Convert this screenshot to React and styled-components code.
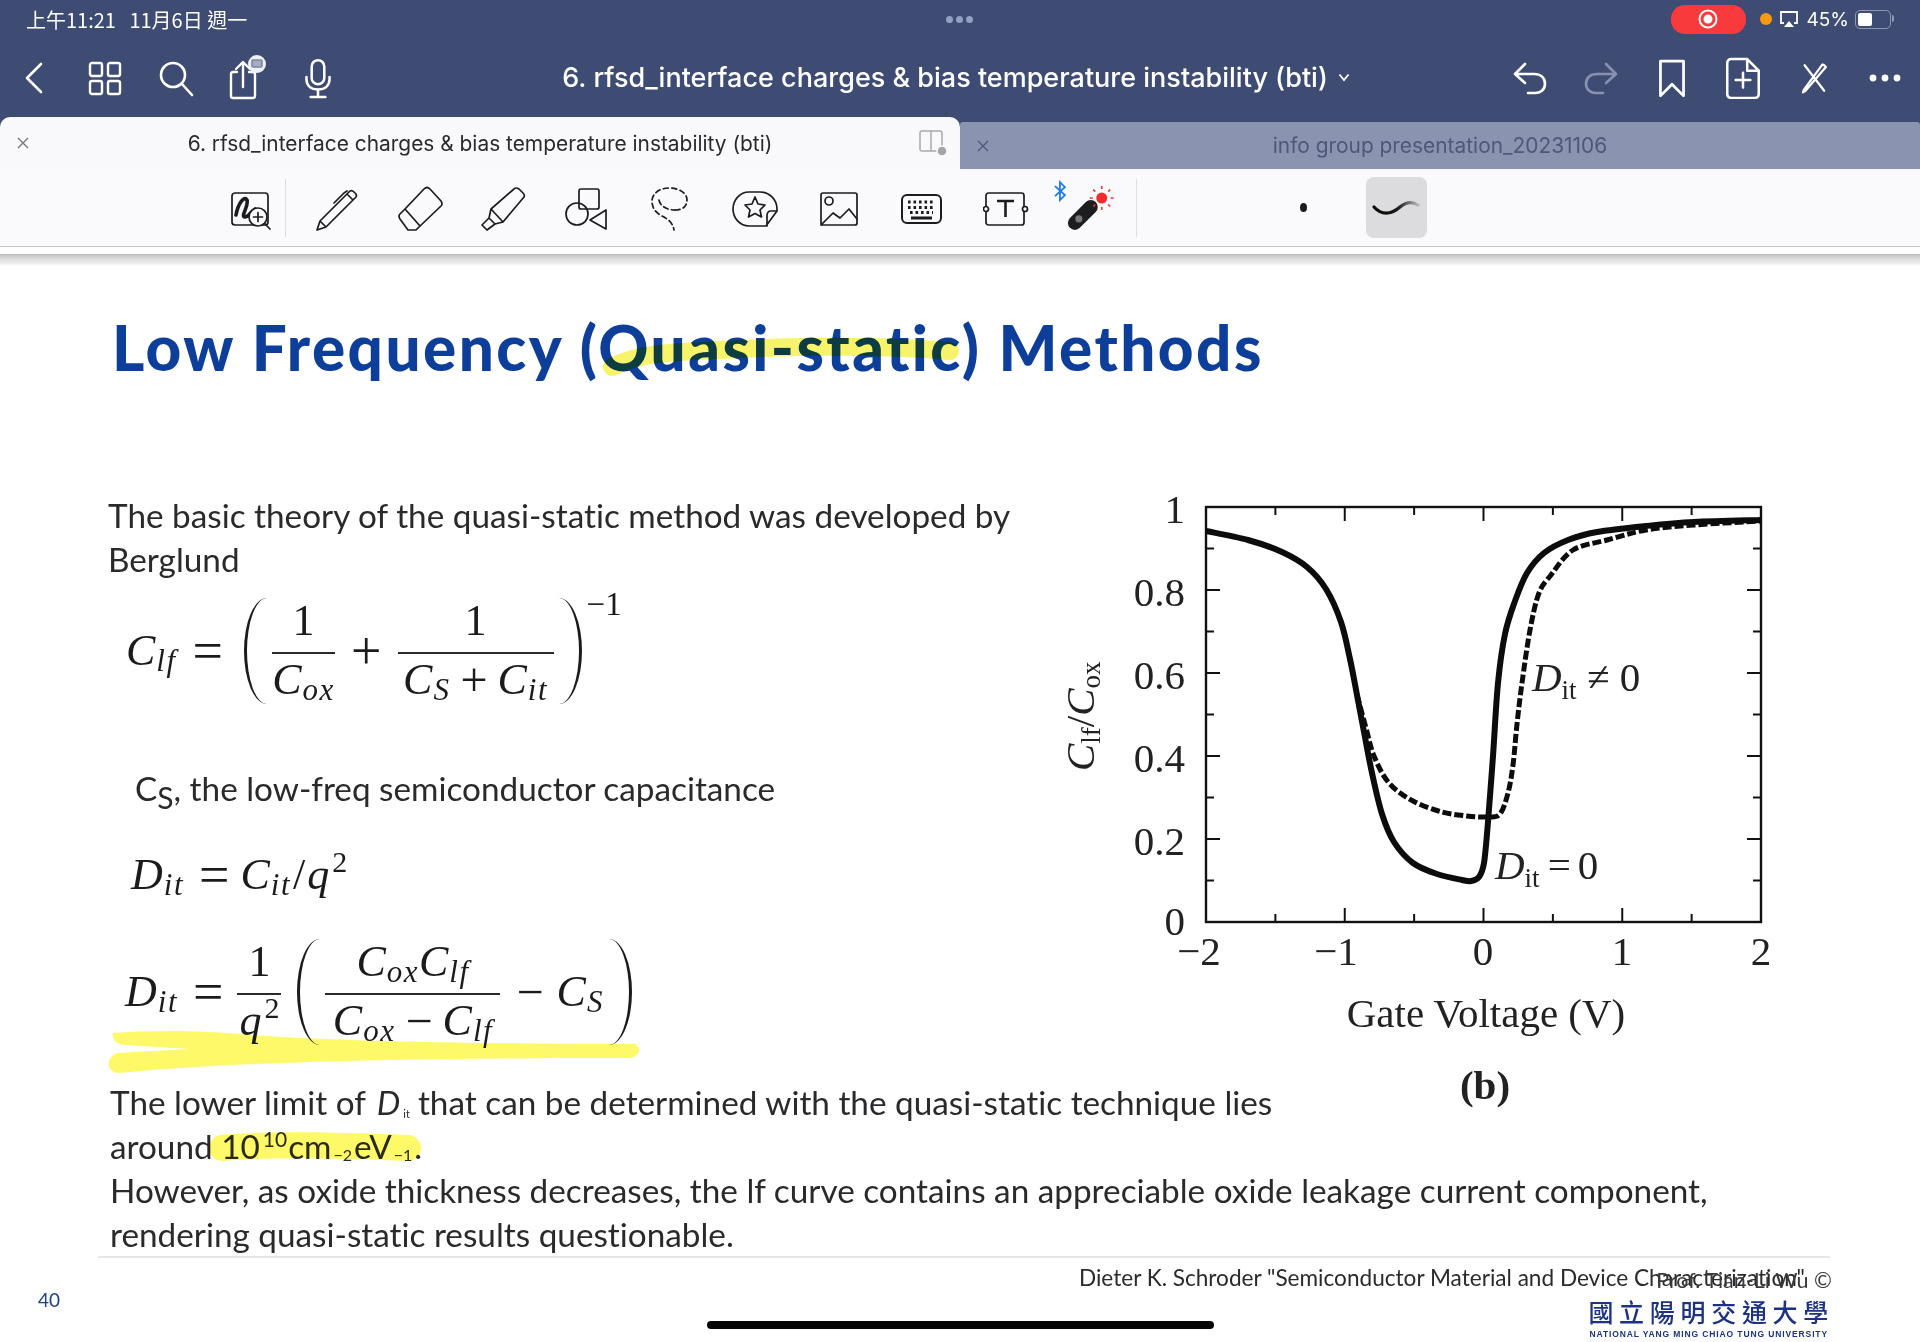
import React from 'react'
import styled, { createGlobalStyle } from 'styled-components'

const GlobalStyle = createGlobalStyle`
  html, body {
    margin: 0;
    padding: 0;
    background: #fff;
  }
  body {
    width: 1920px;
    height: 1342px;
    overflow: hidden;
    font-family: Inter, "Noto Sans", sans-serif;
  }
`

const Page = styled.div`
  position: relative;
  width: 1920px;
  height: 1342px;
  overflow: hidden;
  background: #fff;
`

const Header = styled.header`
  background: #3e4c73;
  color: #fff;
`

const StatusBar = styled.div`
  height: 38px;
  display: grid;
  grid-template-columns: 1fr auto 1fr;
  align-items: center;
  padding: 0 26px;
`

const Clock = styled.div`
  font-family: "Noto Sans CJK TC", sans-serif;
  font-size: 20px;
  white-space: pre;
`

const Dots = styled.div`
  display: flex;
  gap: 3px;
  margin-left: -1px;
  span {
    width: 7px;
    height: 7px;
    border-radius: 50%;
    background: #93a0c4;
  }
`

const StatusRight = styled.div`
  display: flex;
  align-items: center;
  justify-content: flex-end;
  font-size: 19px;
`

const BatteryLabel = styled.span`
  margin-left: 8px;
`

const RecordPill = styled.div`
  width: 75px;
  height: 29px;
  border-radius: 14px;
  background: #f83a3c;
  display: flex;
  align-items: center;
  justify-content: center;
  margin-right: 14px;
`

const OrangeDot = styled.span`
  width: 12px;
  height: 12px;
  border-radius: 50%;
  background: #f59a12;
  margin-right: 7px;
`

const Battery = styled.div`
  width: 36px;
  height: 19px;
  margin: 0 3px 0 6px;
  border: 1.5px solid #8d98b8;
  border-radius: 5px;
  padding: 2px;
  box-sizing: border-box;
  position: relative;
  span {
    display: block;
    width: 45%;
    height: 100%;
    background: #fff;
    border-radius: 2px;
  }
  &::after {
    content: '';
    position: absolute;
    right: -4px;
    top: 4px;
    width: 2px;
    height: 7px;
    border-radius: 0 2px 2px 0;
    background: #8d98b8;
  }
`

const NavBar = styled.div`
  height: 79px;
  display: grid;
  grid-template-columns: 1fr auto 1fr;
  align-items: center;
  box-sizing: border-box;
`

const NavGroup = styled.div`
  display: flex;
  justify-content: ${(p) => (p.$end ? 'flex-end' : 'flex-start')};
  margin-left: ${(p) => (p.$end ? 0 : -1.5)}px;
`

const NavSlot = styled.div`
  width: 71px;
  display: flex;
  justify-content: center;
  align-items: center;
`

const NavTitle = styled.div`
  display: flex;
  align-items: center;
  gap: 10px;
  font-size: 27px;
  font-weight: 500;
  white-space: nowrap;
  margin-left: -8px;
`

const Tabs = styled.div`
  display: flex;
  align-items: flex-end;
  height: 52px;
  background: #3e4c73;
`

const Tab = styled.div`
  flex: 1;
  height: ${(p) => (p.$active ? 52 : 47)}px;
  position: relative;
  display: flex;
  align-items: center;
  justify-content: center;
  box-sizing: border-box;
  font-size: 20.9px;
  white-space: nowrap;
  border-radius: ${(p) => (p.$active ? '10px 10px 0 0' : '3px 3px 0 0')};
  background: ${(p) => (p.$active ? '#f9f8fb' : '#8a93b0')};
  color: ${(p) => (p.$active ? '#2b2b2e' : '#4f5878')};
`

const TabClose = styled.span`
  position: absolute;
  left: 16px;
  top: 50%;
  transform: translateY(-50%);
  display: flex;
`

const TabSplit = styled.span`
  position: absolute;
  right: 12px;
  top: 50%;
  transform: translateY(-50%);
  display: flex;
`

const Toolbar = styled.div`
  height: 77px;
  display: flex;
  align-items: center;
  padding-left: 216.5px;
  background: #faf9fc;
  border-bottom: 1px solid #c6c6c8;
`

const ToolSlot = styled.div`
  width: ${(p) => p.$w || 83.6}px;
  margin-top: 3px;
  display: flex;
  align-items: center;
  justify-content: center;
  flex-shrink: 0;
`

const ToolDivider = styled.div`
  width: 1px;
  height: 58px;
  background: #dededf;
  margin: 0 ${(p) => p.$after}px 0 ${(p) => p.$before}px;
  flex-shrink: 0;
`

const BrushDot = styled.div`
  width: 7px;
  height: 9px;
  border-radius: 50%;
  background: #1d1d1f;
  margin-left: 163px;
  flex-shrink: 0;
`

const BrushButton = styled.div`
  width: 61px;
  height: 61px;
  margin-left: 59px;
  border-radius: 8px;
  background: #dcdbdd;
  display: flex;
  align-items: center;
  justify-content: center;
  flex-shrink: 0;
`

const WhiteStrip = styled.div`
  height: 7px;
  background: #fff;
`

const ShadowFade = styled.div`
  height: 12px;
  background: linear-gradient(#bcbcbc, #d8d8d8 35%, #ececec 75%, #fff);
`

const Slide = styled.main`
  padding-top: 46px;
`

const SlideTitle = styled.h1`
  margin: 0 0 0 112px;
  font-family: Lato, sans-serif;
  font-weight: 900;
  font-size: 62px;
  line-height: 70px;
  letter-spacing: 2.45px;
  color: #0d3e9a;
  white-space: nowrap;
  font-variant-ligatures: none;
`

const Columns = styled.div`
  margin-top: 107px;
  height: 591px;
  display: grid;
  grid-template-columns: 1040px 750px;
`

const LeftColumn = styled.div`
  padding: 4px 0 0 108px;
`

const Body = styled.p`
  margin: ${(p) => p.$top || 0}px 0 0 ${(p) => p.$left || 0}px;
  font-family: Lato, sans-serif;
  font-size: 33.3px;
  line-height: 44px;
  color: #2a2a2c;
  white-space: nowrap;
  font-variant-ligatures: none;
`

const TextVar = styled.i`
  margin-left: 3px;
`

const TextSub = styled.sub`
  font-size: ${(p) => p.$size || 16}px;
  line-height: 0;
  vertical-align: ${(p) => p.$drop ?? -2}px;
  margin: 0 ${(p) => p.$after ?? 2}px 0 ${(p) => p.$before ?? 2}px;
`

const TextSup = styled.sup`
  font-size: 21px;
  line-height: 0;
  vertical-align: 12px;
  margin: 0 1px 0 3px;
`

const Formula = styled.div`
  height: ${(p) => p.$h}px;
  margin: ${(p) => p.$top}px 0 0 ${(p) => p.$left}px;
  display: flex;
  align-items: center;
  font-family: "Liberation Serif", serif;
  font-size: 44px;
  line-height: 1;
  color: #1b1b1d;
  white-space: nowrap;
`

const Var = styled.i`
  font-style: italic;
  margin-right: 1px;
`

const Sub = styled.i`
  font-size: 31px;
  font-style: italic;
  letter-spacing: 1.5px;
  position: relative;
  top: 9px;
`

const Op = styled.span`
  font-size: ${(p) => p.$size || 54}px;
  margin: 0 ${(p) => p.$after ?? p.$gap ?? 16}px 0 ${(p) => p.$gap ?? 16}px;
`

const Frac = styled.div`
  display: inline-flex;
  flex-direction: column;
  align-items: center;
  width: ${(p) => p.$w}px;
`

const Num = styled.div`
  height: 58px;
  box-sizing: border-box;
  padding-bottom: 6px;
  width: 100%;
  border-bottom: 2px solid #2a2a2a;
  display: flex;
  align-items: center;
  justify-content: center;
`

const Den = styled.div`
  height: 52px;
  width: 100%;
  display: flex;
  align-items: center;
  justify-content: center;
`

// half of the ellipse sticks out over the neighbouring fraction, only its curved edge shows
const Paren = styled.span`
  flex-shrink: 0;
  display: inline-block;
  width: 46px;
  height: 106px;
  box-sizing: border-box;
  border-radius: 50%;
  margin: ${(p) => (p.$right ? '0 0 0 -18px' : `0 -18px 0 ${p.$before || 0}px`)};
  border-${(p) => (p.$right ? 'right' : 'left')}: 3.4px solid #1b1b1d;
`

const Power = styled.span`
  font-size: 33px;
  align-self: flex-start;
  position: relative;
  top: -3px;
  margin-left: 5px;
`

const InlineSup = styled.span`
  font-size: 30px;
  position: relative;
  top: -13px;
  margin-left: 2px;
`

const Slash = styled.span`
  margin: 0 2px;
`

const Figure = styled.svg`
  display: block;
  width: 750px;
  height: 620px;
  overflow: visible;
`

const ChartText = styled.text`
  font-family: "Liberation Serif", serif;
  font-size: 41px;
  fill: #222;
`

const LowerText = styled.section`
  margin-left: 110px;
`

const Divider = styled.hr`
  height: 2px;
  margin: 0 90px 0 98px;
  border: 0;
  background: #e6e6e6;
`

const Footer = styled.footer`
  display: flex;
  justify-content: space-between;
  padding: 5px 89px 0 38px;
`

const PageNumber = styled.div`
  margin-top: 26px;
  font-family: Lato, sans-serif;
  font-size: 19px;
  line-height: 22px;
  color: #1e3f8a;
`

const Credits = styled.div`
  display: flex;
  flex-direction: column;
  align-items: flex-end;
`

const CreditStack = styled.div`
  display: grid;
  justify-items: end;
`

const Citation = styled.div`
  grid-area: 1 / 1;
  margin-right: 26px;
  font-family: Lato, sans-serif;
  font-size: 22.6px;
  line-height: 30px;
  color: #2b2b2d;
  white-space: nowrap;
  font-variant-ligatures: none;
`

const Professor = styled.div`
  grid-area: 1 / 1;
  margin: 2px -1px 0 0;
  font-family: Lato, sans-serif;
  font-size: 21.5px;
  line-height: 30px;
  color: #3a3a3c;
  white-space: nowrap;
`

const SchoolName = styled.div`
  margin: 0 -3px 2px 0;
  font-family: "Noto Sans CJK TC", sans-serif;
  font-weight: 500;
  font-size: 25px;
  line-height: 32px;
  letter-spacing: 5.7px;
  color: #1d3282;
`

const SchoolEnglish = styled.div`
  margin-right: 3px;
  font-family: "Liberation Sans", sans-serif;
  font-weight: 700;
  font-size: 8.5px;
  line-height: 11px;
  letter-spacing: 0.88px;
  color: #1d3282;
  white-space: nowrap;
`

const HomeBar = styled.div`
  position: absolute;
  left: 707px;
  bottom: 13px;
  width: 507px;
  height: 8px;
  border-radius: 4px;
  background: #050505;
`

const InkLayer = styled.svg`
  position: absolute;
  left: 0;
  top: 0;
  width: 1920px;
  height: 1342px;
  pointer-events: none;
  mix-blend-mode: multiply;
`

// nav icons
const Stroke = ({ size = 40, children, color = '#fff', width = 2.6 }) => (
  <svg width={size} height={size} viewBox="0 0 40 40" fill="none" stroke={color} strokeWidth={width} strokeLinecap="round" strokeLinejoin="round">
    {children}
  </svg>
)

const Back = () => <Stroke><path d="M27 6 L13 20 L27 34" /></Stroke>
const GridIcon = () => (
  <Stroke width={2.4}>
    <rect x="5" y="5" width="12" height="13" rx="2" />
    <rect x="23" y="5" width="12" height="13" rx="2" />
    <rect x="5" y="23" width="12" height="13" rx="2" />
    <rect x="23" y="23" width="12" height="13" rx="2" />
  </Stroke>
)
const SearchIcon = () => (
  <Stroke><circle cx="17" cy="17" r="12" /><path d="M26 26 L36 37" /></Stroke>
)
const ShareIcon = () => (
  <svg width="44" height="48" viewBox="-2 0 44 48" fill="none" stroke="#fff" strokeWidth="2.4" strokeLinecap="round" strokeLinejoin="round">
    <path d="M10 18 H6 Q4 18 4 20 V42 Q4 44 6 44 H26 Q28 44 28 42 V20 Q28 18 26 18 H22" />
    <path d="M16 33 V9 M9 15 L16 8 L23 15" />
    <circle cx="30" cy="10" r="9" fill="#eef0f5" stroke="none" />
    <rect x="25" y="6" width="10" height="7" rx="1" stroke="#7c869f" strokeWidth="1.6" fill="#a5adc0" />
  </svg>
)
const MicIcon = () => (
  <Stroke size={42} width={2.4}>
    <rect x="14" y="3" width="12" height="23" rx="6" />
    <path d="M9 19 V21 C9 28 14 31 20 31 C26 31 31 28 31 21 V19 M20 31 V37 M13 38 H27" />
  </Stroke>
)
const UndoIcon = () => (
  <Stroke>
    <path d="M15 6 L5 16 L15 25 M5 16 H24 C31 16 35 20 35 26 C35 32 30 35 25 35 H18" />
  </Stroke>
)
const RedoIcon = () => (
  <Stroke color="#8892b0">
    <path d="M25 6 L35 16 L25 25 M35 16 H16 C9 16 5 20 5 26 C5 32 10 35 15 35 H22" />
  </Stroke>
)
const BookmarkIcon = () => (
  <Stroke size={42}><path d="M9 4 H31 V37 L20 26 L9 37 Z" /></Stroke>
)
const AddPageIcon = () => (
  <Stroke size={42} width={2.4}>
    <path d="M24 2 H9 Q5 2 5 6 V35 Q5 39 9 39 H31 Q35 39 35 35 V13 Z M24 2 V13 H35 M20 15 V29 M13 22 H27" />
  </Stroke>
)
const MarkupIcon = () => (
  <Stroke size={34} width={2.6}>
    <path d="M9 5 L32 35 M32 5 L30 4 L8 34 L7 37 L10 35 L34 7 Z" />
  </Stroke>
)
const MoreIcon = () => (
  <svg width="34" height="10" viewBox="0 0 34 10" fill="#fff">
    <circle cx="5" cy="5" r="3.4" /><circle cx="17" cy="5" r="3.4" /><circle cx="29" cy="5" r="3.4" />
  </svg>
)
const Chevron = () => (
  <svg width="12" height="9" viewBox="0 0 12 9" fill="none" stroke="#fff" strokeWidth="1.8"><path d="M1.5 1.5 L6 7 L10.5 1.5" /></svg>
)
const CloseX = ({ color }) => (
  <svg width="14" height="14" viewBox="0 0 14 14" fill="none" stroke={color} strokeWidth="1.4"><path d="M2 2 L12 12 M12 2 L2 12" /></svg>
)
const SplitIcon = () => (
  <svg width="30" height="30" viewBox="0 0 30 30" fill="none" stroke="#a9a9ae" strokeWidth="1.5">
    <rect x="2" y="3" width="22" height="20" rx="2" />
    <path d="M13 3 V23" />
    <circle cx="24" cy="23" r="5" fill="#a4a4a9" stroke="#f9f8fb" />
  </svg>
)
const RecordRing = () => (
  <svg width="22" height="22" viewBox="0 0 22 22">
    <circle cx="11" cy="11" r="8.5" fill="none" stroke="#fff" strokeWidth="2" />
    <circle cx="11" cy="11" r="4.5" fill="#fff" />
  </svg>
)
const AirPlay = () => (
  <svg width="20" height="20" viewBox="0 0 20 20" fill="none" stroke="#fff" strokeWidth="1.8">
    <path d="M5 14 H2 V3 H18 V14 H15" />
    <path d="M10 12 L15 18 H5 Z" fill="#fff" stroke="none" />
  </svg>
)

// toolbar icons
const Tool = ({ children, w = 46, h = 46 }) => (
  <svg width={w} height={h} viewBox={`0 0 ${w} ${h}`} fill="none" stroke="#1c1c1e" strokeWidth="1.7" strokeLinecap="round" strokeLinejoin="round">
    {children}
  </svg>
)
const InkZoom = () => (
  <Tool>
    <rect x="4" y="7" width="36" height="32" rx="3" />
    <path d="M8 29 C10 18 16 9 19 14 C21 20 12 31 17 31 C21 31 23 25 27 23" strokeWidth="3.6" />
    <circle cx="30" cy="31" r="9" fill="#faf9fc" />
    <path d="M30 26.5 V35.5 M25.5 31 H34.5 M36.5 37.5 L42 43" />
  </Tool>
)
const Pencil = () => (
  <Tool>
    <path d="M3 44 L6 35 L33 8 L39 14 L12 41 Z M6 35 L12 41 M33 8 L36 5 Q38 4 40 6 L42 8 Q43 10 42 11 L39 14" />
    <path d="M20 17 L30 7 L33 5" />
  </Tool>
)
const Eraser = () => (
  <Tool>
    <path d="M26 3 Q29 0 32 3 L43 15 Q45 18 43 20 L21 41 L18 44 L10 44 L2 33 Q0 30 2 28 L7 23 Z M7 23 L22 40" />
  </Tool>
)
const Highlighter = () => (
  <Tool>
    <path d="M33 3 L10 23 L8 32 L14 38 L22 36 L43 11 Q44 9 42 7 L38 3 Q35 1 33 3 Z M10 23 L22 36 M8 32 L1 39 L6 44 L14 38" />
  </Tool>
)
const Shapes = () => (
  <Tool>
    <rect x="14" y="3" width="20" height="20" rx="2" />
    <circle cx="12" cy="28" r="11" />
    <path d="M41 24 V43 L25 34 Z" />
  </Tool>
)
const Lasso = () => (
  <Tool>
    <path d="M26 24 C34 24 38 20 38 14 C38 7 30 2 20 2 C10 2 3 8 3 15 C3 22 7 27 13 30 C19 33 24 37 25 44" strokeDasharray="5 3.4" />
    <path d="M10 14 C11 20 18 24 26 24" strokeDasharray="5 3.4" />
  </Tool>
)
const Sticker = () => (
  <Tool>
    <path d="M17 6 H28 C38 6 45 14 45 23 V25 L34 40 H17 C8 40 1 32 1 23 C1 14 8 6 17 6 Z M45 25 H39 Q35 25 35 30 V40" />
    <path d="M23 11 L26 18 L33 19 L28 24 L29.5 31 L23 27.5 L16.5 31 L18 24 L13 19 L20 18 Z" />
  </Tool>
)
const ImageIcon = () => (
  <Tool>
    <rect x="5" y="7" width="36" height="32" rx="2" />
    <circle cx="13" cy="15" r="4" />
    <path d="M5 39 L17 27 L24 32 L33 23 L41 33" />
  </Tool>
)
const KeyboardIcon = () => (
  <Tool>
    <rect x="3" y="9" width="39" height="28" rx="5" strokeWidth="2" />
    <path d="M9 16 H36 M9 21.5 H36 M11 26.5 H34" strokeWidth="3.2" strokeDasharray="2.6 2.9" strokeLinecap="butt" />
    <path d="M12 32 H33" strokeWidth="3" strokeLinecap="butt" />
  </Tool>
)
const TextBox = () => (
  <Tool>
    <rect x="3" y="7" width="38" height="32" rx="2.5" />
    <circle cx="3" cy="23" r="2.5" fill="#faf9fc" />
    <circle cx="42" cy="23" r="2.5" fill="#faf9fc" />
    <path d="M14 15 H31 M22.5 15 V31" strokeWidth="2.6" strokeLinecap="butt" />
  </Tool>
)
const LaserPointer = () => (
  <svg width="84" height="60" viewBox="7 0 84 60" fill="none">
    <path d="M14 7 L24 16 L19 21 V3 L24 8 L14 17" stroke="#1a7be6" strokeWidth="1.8" />
    <path d="M34 44 L50 28" stroke="#1d1d20" strokeWidth="14" strokeLinecap="round" />
    <circle cx="38" cy="40" r="3.6" fill="#77777b" />
    <circle cx="61" cy="19" r="5.5" fill="#f42b2b" />
    <path d="M61 7 V10 M61 28 V31 M49 19 H52 M70 19 H73 M52.5 10.5 L54.5 12.5 M67.5 25.5 L69.5 27.5 M69.5 10.5 L67.5 12.5 M54.5 25.5 L52.5 27.5" stroke="#e33" strokeWidth="1.6" />
  </svg>
)
const BrushStroke = () => (
  <svg width="50" height="26" viewBox="0 0 50 26" fill="none">
    <defs>
      <linearGradient id="brushFade" x1="0" x2="1" y1="0" y2="0">
        <stop offset="0" stopColor="#0a0a0a" />
        <stop offset="0.55" stopColor="#1b1b1b" />
        <stop offset="1" stopColor="#b9b9bb" />
      </linearGradient>
    </defs>
    <path d="M3 12 C12 22 22 18 29 12 C35 7 41 6 47 10" stroke="url(#brushFade)" strokeWidth="3.2" strokeLinecap="round" />
  </svg>
)

// chart: points traced from the figure, given as page coordinates
const solidCurve = [
  [1206, 532], [1248, 541], [1282, 553], [1307, 568], [1326, 590], [1341, 623], [1350, 660], [1357, 696], [1364, 733],
  [1372, 774], [1382, 815], [1394, 843], [1413, 864], [1437, 875], [1462, 881], [1471, 882], [1479, 878], [1484, 864],
  [1488, 823], [1493, 757], [1498, 684], [1505, 635], [1515, 602], [1527, 574], [1544, 554], [1568, 541], [1597, 533],
  [1646, 527], [1694, 523], [1761, 521],
]
const dashedCurve = [
  [1357, 696], [1366, 729], [1374, 757], [1389, 784], [1413, 802], [1442, 813], [1467, 817], [1488, 818], [1500, 815],
  [1508, 794], [1513, 766], [1517, 725], [1522, 684], [1530, 631], [1539, 594], [1551, 576], [1573, 551], [1607, 541],
  [1646, 531], [1694, 526], [1761, 522],
]

const smooth = (pts) => {
  let d = `M${pts[0][0]} ${pts[0][1]}`
  for (let i = 0; i < pts.length - 1; i++) {
    const p0 = pts[i - 1] || pts[i]
    const p1 = pts[i]
    const p2 = pts[i + 1]
    const p3 = pts[i + 2] || p2
    const c1 = [p1[0] + (p2[0] - p0[0]) / 6, p1[1] + (p2[1] - p0[1]) / 6]
    const c2 = [p2[0] - (p3[0] - p1[0]) / 6, p2[1] - (p3[1] - p1[1]) / 6]
    d += ` C${c1[0]} ${c1[1]} ${c2[0]} ${c2[1]} ${p2[0]} ${p2[1]}`
  }
  return d
}

const plot = { left: 1206, right: 1761, top: 508, bottom: 923 }
const xAt = (v) => 1483.5 + v * 138.75
const yAt = (v) => plot.bottom - v * (plot.bottom - plot.top)

const xTicks = [-1.5, -1, -0.5, 0, 0.5, 1, 1.5]
const yTicks = [0.1, 0.2, 0.3, 0.4, 0.5, 0.6, 0.7, 0.8, 0.9]
const yLabels = [['1', 1], ['0.8', 0.8], ['0.6', 0.6], ['0.4', 0.4], ['0.2', 0.2], ['0', 0]]
const xLabels = [['−2', 1199], ['−1', 1336], ['0', 1483], ['1', 1622], ['2', 1761]]

const Chart = () => (
  <Figure viewBox="1040 490 750 620">
    <rect x={plot.left} y={plot.top} width={plot.right - plot.left} height={plot.bottom - plot.top} fill="none" stroke="#111" strokeWidth="2.4" />
    {xTicks.map((t) => {
      const len = Number.isInteger(t) ? 14 : 8
      return (
        <g key={t} stroke="#111" strokeWidth="2">
          <line x1={xAt(t)} x2={xAt(t)} y1={plot.bottom} y2={plot.bottom - len} />
          <line x1={xAt(t)} x2={xAt(t)} y1={plot.top} y2={plot.top + len} />
        </g>
      )
    })}
    {yTicks.map((t, i) => {
      const len = i % 2 === 1 ? 14 : 8
      return (
        <g key={t} stroke="#111" strokeWidth="2">
          <line x1={plot.left} x2={plot.left + len} y1={yAt(t)} y2={yAt(t)} />
          <line x1={plot.right} x2={plot.right - len} y1={yAt(t)} y2={yAt(t)} />
        </g>
      )
    })}
    <path d={smooth(dashedCurve)} fill="none" stroke="#0c0c0c" strokeWidth="5" strokeDasharray="9 3" />
    <path d={smooth(solidCurve)} fill="none" stroke="#0c0c0c" strokeWidth="6" strokeLinejoin="round" />
    {yLabels.map(([label, v]) => (
      <ChartText key={label} x="1185" y={yAt(v) + (v === 0 ? 13 : 16)} textAnchor="end">{label}</ChartText>
    ))}
    {xLabels.map(([label, x]) => (
      <ChartText key={label} x={x} y="966" textAnchor="middle">{label}</ChartText>
    ))}
    <ChartText x="1486" y="1028" textAnchor="middle">Gate Voltage (V)</ChartText>
    <ChartText x="1485" y="1100" textAnchor="middle" fontWeight="700">(b)</ChartText>
    <ChartText x="1532" y="692">
      <tspan fontStyle="italic">D</tspan><tspan fontSize="27" dy="8">it</tspan><tspan dy="-8"> ≠ 0</tspan>
    </ChartText>
    <ChartText x="1495" y="880">
      <tspan fontStyle="italic">D</tspan><tspan fontSize="27" dy="8">it</tspan><tspan dy="-8" dx="8">=</tspan><tspan dx="7">0</tspan>
    </ChartText>
    <ChartText transform="translate(1094 772) rotate(-90)">
      <tspan fontStyle="italic">C</tspan><tspan fontSize="27" dy="6">lf</tspan><tspan dy="-6">/</tspan><tspan fontStyle="italic">C</tspan><tspan fontSize="27" dy="6">ox</tspan>
    </ChartText>
  </Figure>
)

const App = () => (
  <Page>
    <GlobalStyle />
    <Header>
      <StatusBar>
        <Clock>上午11:21   11月6日 週一</Clock>
        <Dots><span /><span /><span /></Dots>
        <StatusRight>
          <RecordPill><RecordRing /></RecordPill>
          <OrangeDot />
          <AirPlay />
          <BatteryLabel>45%</BatteryLabel>
          <Battery><span /></Battery>
        </StatusRight>
      </StatusBar>
      <NavBar>
        <NavGroup>
          <NavSlot><Back /></NavSlot>
          <NavSlot><GridIcon /></NavSlot>
          <NavSlot><SearchIcon /></NavSlot>
          <NavSlot><ShareIcon /></NavSlot>
          <NavSlot><MicIcon /></NavSlot>
        </NavGroup>
        <NavTitle>6. rfsd_interface charges &amp; bias temperature instability (bti) <Chevron /></NavTitle>
        <NavGroup $end>
          <NavSlot><UndoIcon /></NavSlot>
          <NavSlot><RedoIcon /></NavSlot>
          <NavSlot><BookmarkIcon /></NavSlot>
          <NavSlot><AddPageIcon /></NavSlot>
          <NavSlot><MarkupIcon /></NavSlot>
          <NavSlot><MoreIcon /></NavSlot>
        </NavGroup>
      </NavBar>
      <Tabs>
        <Tab $active>
          <TabClose><CloseX color="#77777c" /></TabClose>
          6. rfsd_interface charges &amp; bias temperature instability (bti)
          <TabSplit><SplitIcon /></TabSplit>
        </Tab>
        <Tab>
          <TabClose><CloseX color="#4f5878" /></TabClose>
          info group presentation_20231106
        </Tab>
      </Tabs>
    </Header>
    <Toolbar>
      <ToolSlot $w={68.5}><InkZoom /></ToolSlot>
      <ToolDivider $before={0} $after={9.5} />
      <ToolSlot><Pencil /></ToolSlot>
      <ToolSlot><Eraser /></ToolSlot>
      <ToolSlot><Highlighter /></ToolSlot>
      <ToolSlot><Shapes /></ToolSlot>
      <ToolSlot><Lasso /></ToolSlot>
      <ToolSlot><Sticker /></ToolSlot>
      <ToolSlot><ImageIcon /></ToolSlot>
      <ToolSlot><KeyboardIcon /></ToolSlot>
      <ToolSlot><TextBox /></ToolSlot>
      <ToolSlot><LaserPointer /></ToolSlot>
      <ToolDivider $before={4.5} $after={0} />
      <BrushDot />
      <BrushButton><BrushStroke /></BrushButton>
    </Toolbar>
    <WhiteStrip />
    <ShadowFade />
    <Slide>
      <SlideTitle>Low Frequency (Quasi-static) Methods</SlideTitle>
      <Columns>
        <LeftColumn>
          <Body>The basic theory of the quasi-static method was developed by<br />Berglund</Body>
          <Formula $h={120} $top={10} $left={18}>
            <Var>C</Var><Sub>lf</Sub>
            <Op $after={21}>=</Op>
            <Paren />
            <Frac $w={63}>
              <Num>1</Num>
              <Den><Var>C</Var><Sub>ox</Sub></Den>
            </Frac>
            <Op>+</Op>
            <Frac $w={156}>
              <Num>1</Num>
              <Den><Var>C</Var><Sub>S</Sub><Op $size={48} $gap={10}>+</Op><Var>C</Var><Sub>it</Sub></Den>
            </Frac>
            <Paren $right />
            <Power>−1</Power>
          </Formula>
          <Body $top={55} $left={27}>C<TextSub $size={30} $drop={-8} $before={0} $after={0}>S</TextSub>, the low-freq semiconductor capacitance</Body>
          <Formula $h={60} $top={35} $left={23}>
            <Var>D</Var><Sub>it</Sub>
            <Op $gap={15} $after={11}>=</Op>
            <Var>C</Var><Sub>it</Sub><Slash>/</Slash><Var>q</Var><InlineSup>2</InlineSup>
          </Formula>
          <Formula $h={120} $top={27} $left={17}>
            <Var>D</Var><Sub>it</Sub>
            <Op $gap={15} $after={14}>=</Op>
            <Frac $w={44}>
              <Num>1</Num>
              <Den><Var>q</Var><InlineSup>2</InlineSup></Den>
            </Frac>
            <Paren $before={16} />
            <Frac $w={175}>
              <Num><Var>C</Var><Sub>ox</Sub><Var>C</Var><Sub>lf</Sub></Num>
              <Den><Var>C</Var><Sub>ox</Sub><Op $size={48} $gap={10}>−</Op><Var>C</Var><Sub>lf</Sub></Den>
            </Frac>
            <Op $size={48} $gap={16} $after={13}>−</Op>
            <Var>C</Var><Sub>S</Sub>
            <Paren $right />
          </Formula>
        </LeftColumn>
        <Chart />
      </Columns>
      <LowerText>
        <Body>
          The lower limit of <TextVar>D</TextVar><TextSub $size={11} $drop={-3} $before={3} $after={8}>it</TextSub>that can be determined with the quasi-static technique lies<br />
          around 10<TextSup>10</TextSup>cm<TextSub>−2</TextSub>eV<TextSub>−1</TextSub>.<br />
          However, as oxide thickness decreases, the lf curve contains an appreciable oxide leakage current component,<br />
          rendering quasi-static results questionable.
        </Body>
      </LowerText>
      <Divider />
      <Footer>
        <PageNumber>40</PageNumber>
        <Credits>
          <CreditStack>
            <Citation>Dieter K. Schroder "Semiconductor Material and Device Characterization"</Citation>
            <Professor>Prof. Tian-Li Wu ©</Professor>
          </CreditStack>
          <SchoolName>國立陽明交通大學</SchoolName>
          <SchoolEnglish>NATIONAL YANG MING CHIAO TUNG UNIVERSITY</SchoolEnglish>
        </Credits>
      </Footer>
    </Slide>
    <InkLayer viewBox="0 0 1920 1342">
      <path d="M612 367 C640 352 680 352 720 350 C790 346 880 345 950 351" fill="none" stroke="#f7f46c" strokeWidth="18" strokeLinecap="round" />
      <path d="M113 1033 C112 1040 116 1044 125 1045 L190 1049 L118 1053 C108 1056 106 1066 112 1071 L118 1073 C250 1060 450 1058 630 1058 C640 1056 642 1048 635 1044 C500 1044 350 1042 250 1035 C200 1030 150 1030 113 1033 Z" fill="#fdf968" />
      <path d="M222 1148 C280 1143 350 1146 408 1148" fill="none" stroke="#fdf968" strokeWidth="26" strokeLinecap="round" />
    </InkLayer>
    <HomeBar />
  </Page>
)

export default App
